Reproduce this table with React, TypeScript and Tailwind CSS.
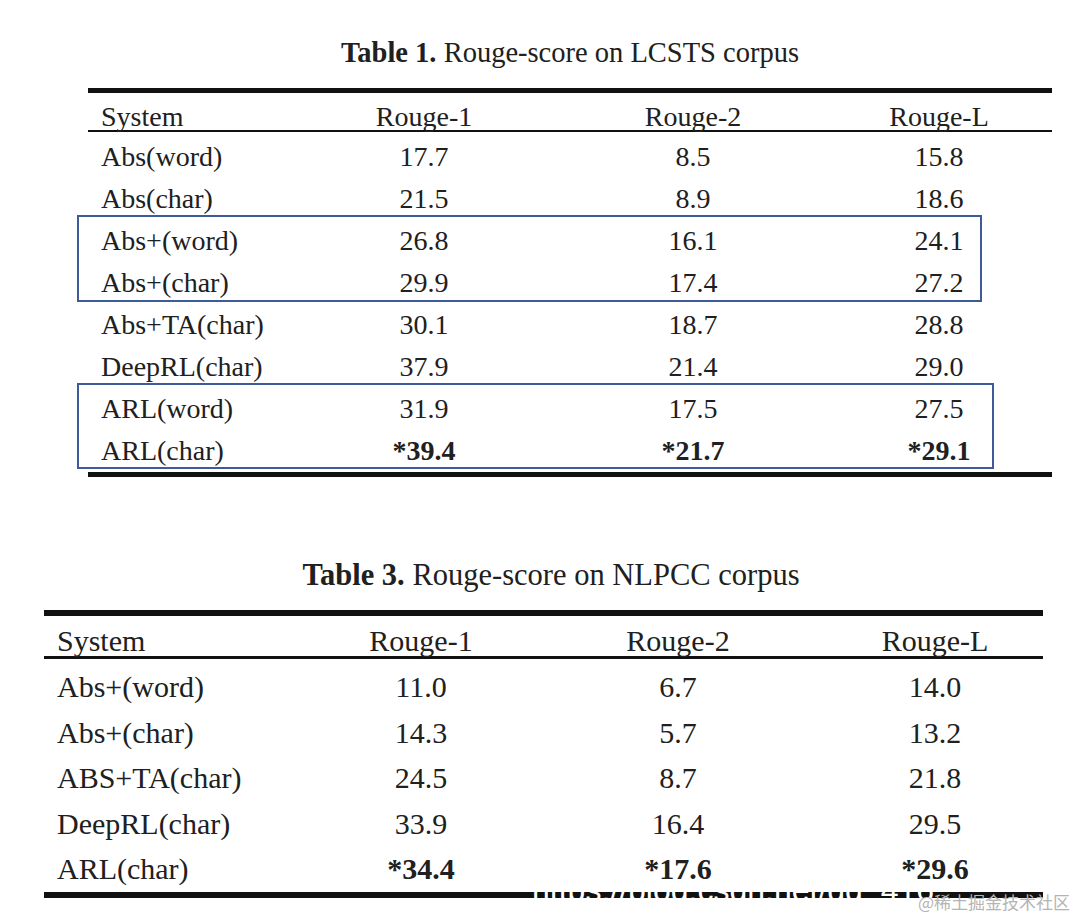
import React from 'react'

type Row = { name: string; r1: string; r2: string; rl: string; best?: boolean }

const lcsts: Row[] = [
  { name: 'Abs(word)', r1: '17.7', r2: '8.5', rl: '15.8' },
  { name: 'Abs(char)', r1: '21.5', r2: '8.9', rl: '18.6' },
  { name: 'Abs+(word)', r1: '26.8', r2: '16.1', rl: '24.1' },
  { name: 'Abs+(char)', r1: '29.9', r2: '17.4', rl: '27.2' },
  { name: 'Abs+TA(char)', r1: '30.1', r2: '18.7', rl: '28.8' },
  { name: 'DeepRL(char)', r1: '37.9', r2: '21.4', rl: '29.0' },
  { name: 'ARL(word)', r1: '31.9', r2: '17.5', rl: '27.5' },
  { name: 'ARL(char)', r1: '*39.4', r2: '*21.7', rl: '*29.1', best: true },
]

const nlpcc: Row[] = [
  { name: 'Abs+(word)', r1: '11.0', r2: '6.7', rl: '14.0' },
  { name: 'Abs+(char)', r1: '14.3', r2: '5.7', rl: '13.2' },
  { name: 'ABS+TA(char)', r1: '24.5', r2: '8.7', rl: '21.8' },
  { name: 'DeepRL(char)', r1: '33.9', r2: '16.4', rl: '29.5' },
  { name: 'ARL(char)', r1: '*34.4', r2: '*17.6', rl: '*29.6', best: true },
]

export default function App() {
  return (
    <div className="relative h-[915px] w-[1090px] overflow-hidden bg-white font-['Liberation_Serif',serif] text-[#202020]">
      {/* Table 1 */}
      <section className="relative ml-[88px] w-[964px] pt-[37px]">
        <div className="h-[32px] text-center text-[28.5px] leading-[32px]">
          <b>Table 1.</b> Rouge-score on LCSTS corpus
        </div>
        <div className="mt-[19px] h-[5px] bg-[#111]" />
        <div className="grid h-[37px] grid-cols-[202px_268px_270px_222px] pt-[8px] text-[28px] leading-[31px]">
          <div className="pl-[13px]">System</div>
          <div className="text-center">Rouge-1</div>
          <div className="text-center">Rouge-2</div>
          <div className="text-center">Rouge-L</div>
        </div>
        <div className="h-[2px] bg-[#111]" />
        <div className="pt-[4px]">
          {lcsts.map((row) => (
            <div
              key={row.name}
              className="grid h-[42px] grid-cols-[202px_268px_270px_222px] text-[28px] leading-[42px]"
            >
              <div className="pl-[13px]">{row.name}</div>
              <div className={row.best ? 'text-center font-bold' : 'text-center'}>{row.r1}</div>
              <div className={row.best ? 'text-center font-bold' : 'text-center'}>{row.r2}</div>
              <div className={row.best ? 'text-center font-bold' : 'text-center'}>{row.rl}</div>
            </div>
          ))}
        </div>
        <div className="h-[5px] bg-[#111]" />

        {/* highlight boxes */}
        <div className="absolute left-[-11px] top-[215px] h-[87px] w-[905px] border-2 border-[#3d5a99]" />
        <div className="absolute left-[-11px] top-[383px] h-[86px] w-[917px] border-2 border-[#3d5a99]" />
      </section>

      {/* Table 3 */}
      <section className="relative ml-[44px] mt-[81px] w-[999px]">
        <div className="h-[34px] pl-[15px] text-center text-[30.5px] leading-[34px]">
          <b>Table 3.</b> Rouge-score on NLPCC corpus
        </div>
        <div className="mt-[18px] h-[6px] bg-[#111]" />
        <div className="grid h-[40px] grid-cols-[249px_256px_258px_256px] pt-[8px] text-[30px] leading-[33px]">
          <div className="pl-[13px]">System</div>
          <div className="text-center">Rouge-1</div>
          <div className="text-center">Rouge-2</div>
          <div className="text-center">Rouge-L</div>
        </div>
        <div className="h-[3px] bg-[#111]" />
        <div className="pt-[5px]">
          {nlpcc.map((row) => (
            <div
              key={row.name}
              className="grid h-[45.5px] grid-cols-[249px_256px_258px_256px] text-[30px] leading-[45.5px]"
            >
              <div className="pl-[13px]">{row.name}</div>
              <div className={row.best ? 'text-center font-bold' : 'text-center'}>{row.r1}</div>
              <div className={row.best ? 'text-center font-bold' : 'text-center'}>{row.r2}</div>
              <div className={row.best ? 'text-center font-bold' : 'text-center'}>{row.rl}</div>
            </div>
          ))}
        </div>
        <div className="h-[6px] bg-[#111]" />
      </section>

      {/* watermarks */}
      <div className="absolute left-[532px] top-[870px] whitespace-nowrap font-['Liberation_Sans',sans-serif] text-[32px] leading-[40px] text-white">
        https://blog.csdn.net/qq_416
      </div>
      <div className="absolute left-[918px] top-[891px] whitespace-nowrap font-['Noto_Sans_CJK_SC',sans-serif] text-[17px] leading-[22px] text-[#b4b4b4]">
        @稀土掘金技术社区
      </div>
    </div>
  )
}
